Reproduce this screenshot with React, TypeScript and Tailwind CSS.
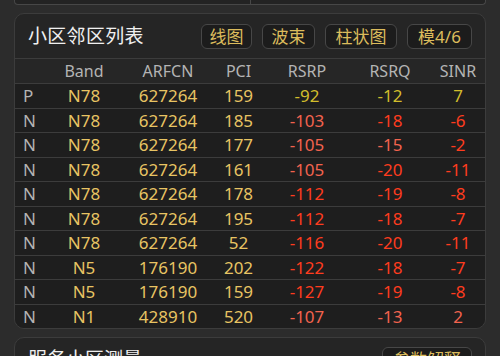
const rows = [
  { t: "P", band: "N78", arfcn: "627264", pci: "159", rsrp: -92, rsrq: -12, sinr: 7 },
  { t: "N", band: "N78", arfcn: "627264", pci: "185", rsrp: -103, rsrq: -18, sinr: -6 },
  { t: "N", band: "N78", arfcn: "627264", pci: "177", rsrp: -105, rsrq: -15, sinr: -2 },
  { t: "N", band: "N78", arfcn: "627264", pci: "161", rsrp: -105, rsrq: -20, sinr: -11 },
  { t: "N", band: "N78", arfcn: "627264", pci: "178", rsrp: -112, rsrq: -19, sinr: -8 },
  { t: "N", band: "N78", arfcn: "627264", pci: "195", rsrp: -112, rsrq: -18, sinr: -7 },
  { t: "N", band: "N78", arfcn: "627264", pci: "52", rsrp: -116, rsrq: -20, sinr: -11 },
  { t: "N", band: "N5", arfcn: "176190", pci: "202", rsrp: -122, rsrq: -18, sinr: -7 },
  { t: "N", band: "N5", arfcn: "176190", pci: "159", rsrp: -127, rsrq: -19, sinr: -8 },
  { t: "N", band: "N1", arfcn: "428910", pci: "520", rsrp: -107, rsrq: -13, sinr: 2 },
];

const YELLOW = "text-[#d2bd2c]";
const SALMON = "text-[#f2634e]";
const RED = "text-[#ff3c1e]";

function rsrpColor(v: number) {
  if (v >= -100) return YELLOW;
  if (v >= -110) return SALMON;
  return RED;
}
function rsrqColor(v: number) {
  if (v >= -12) return YELLOW;
  if (v >= -16) return SALMON;
  return RED;
}
function sinrColor(v: number) {
  if (v >= 5) return YELLOW;
  if (v >= 0) return SALMON;
  return RED;
}

const cols = "grid grid-cols-[31px_76px_92px_49px_88px_78px_58px] items-center";

function Btn({ label, w }: { label: string; w: string }) {
  return (
    <div
      className={`${w} h-[25px] flex items-center justify-center rounded-[6px] border border-[#474747] bg-[#1c1c1c] text-[#dcbc5c] text-[17px] leading-none`}
    >
      {label}
    </div>
  );
}

export default function App() {
  return (
    <div
      className="w-[500px] h-[356px] overflow-hidden bg-[#2c2c2c]"
      style={{ fontFamily: '"Noto Sans", "Noto Sans CJK SC", sans-serif' }}
    >
      {/* bottom of previous panel */}
      <div className="mx-[14px] h-[5px] flex rounded-b-[4px] border border-t-0 border-[#474747] bg-[#232323]">
        <div className="w-[236px] border-r border-[#474747]" />
      </div>

      <div className="mx-[14px] mt-[8px] rounded-[10px] border border-[#3c3c3c] bg-[#252525] overflow-hidden">
        <div className="h-[44px] flex items-center justify-between pl-[13px] pr-[13px] pt-[1px]">
          <span className="text-[19px] text-[#f0f0f0] tracking-[0.3px]">小区邻区列表</span>
          <div className="flex items-center gap-[10px]">
            <Btn label="线图" w="w-[51px]" />
            <Btn label="波束" w="w-[53px]" />
            <Btn label="柱状图" w="w-[72px]" />
            <Btn label="模4/6" w="w-[65px]" />
          </div>
        </div>
        <div className={`${cols} h-[25px] border-t border-[#3c3c3c] bg-[#262626] text-[16px] text-[#b4b4b4]`}>
          <span />
          <span className="text-center">Band</span>
          <span className="text-center">ARFCN</span>
          <span className="text-center">PCI</span>
          <span className="text-center">RSRP</span>
          <span className="text-center">RSRQ</span>
          <span className="text-center">SINR</span>
        </div>
        {rows.map((r, i) => (
          <div
            key={i}
            className={`${cols} h-[24.5px] border-t border-[#3c3c3c] bg-[#1e1e1e] text-[17px] leading-none`}
          >
            <span className="pl-[8px] text-[#b4b4b4]">{r.t}</span>
            <span className="text-center text-[#e8c463]">{r.band}</span>
            <span className="text-center text-[#e8c463]">{r.arfcn}</span>
            <span className="text-center text-[#e8c463]">{r.pci}</span>
            <span className={`text-center ${rsrpColor(r.rsrp)}`}>{r.rsrp}</span>
            <span className={`text-center ${rsrqColor(r.rsrq)}`}>{r.rsrq}</span>
            <span className={`text-center ${sinrColor(r.sinr)}`}>{r.sinr}</span>
          </div>
        ))}
      </div>

      <div className="mx-[14px] mt-[8px] h-[60px] rounded-[10px] border border-[#3c3c3c] bg-[#252525]">
        <div className="h-[43px] flex items-center justify-between pl-[13px] pr-[13px]">
          <span className="text-[19px] text-[#f0f0f0]">服务小区测量</span>
          <Btn label="参数解释" w="w-[90px]" />
        </div>
      </div>
    </div>
  );
}
